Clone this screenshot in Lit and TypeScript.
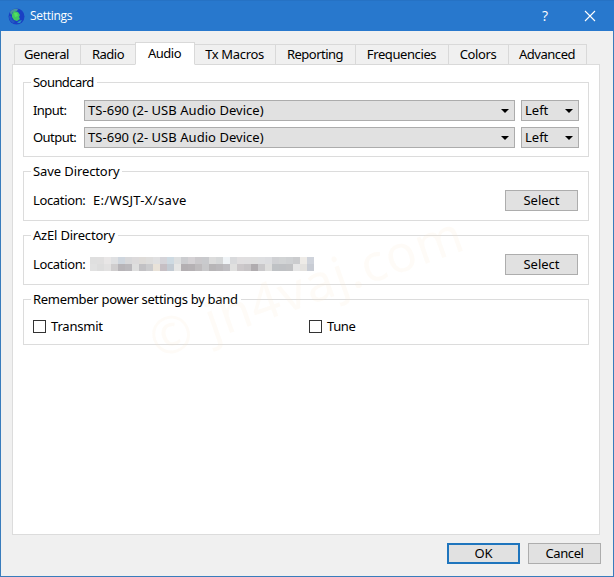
import { LitElement, html, css } from "lit";
import { customElement } from "lit/decorators.js";
import { styleMap } from "lit/directives/style-map.js";

const TABS: { label: string; width: number; spacing: number }[] = [
  { label: "General", width: 67, spacing: -0.4 },
  { label: "Radio", width: 54, spacing: -0.5 },
  { label: "Audio", width: 60, spacing: -0.5 },
  { label: "Tx Macros", width: 81, spacing: -0.35 },
  { label: "Reporting", width: 80, spacing: -0.5 },
  { label: "Frequencies", width: 93, spacing: -0.4 },
  { label: "Colors", width: 60, spacing: -0.4 },
  { label: "Advanced", width: 78, spacing: -0.45 },
];

const MOSAIC_TOP = "dfdfdf e0dfdf e8e6e6 dfe0e2 cfd6de d8d8da dcdadb dedbd8 dedddc e0e0e1 d5d4d9 cedae2 dddfe0 cccdd0 d5d2d5 cbc9cc c9cacd dcdcdc d6d8d9 eff3f6 d9dadc e1dfe0 e0dfe0 dfdfdf dedfe1 dcdde0 d0d1d4 d2d4d5 cfd1d3 cbccce eeebe7 cfd3db".split(" ");
const MOSAIC_BOTTOM = "e1e1e1 dddddd e2e1e1 cfcdce b7b4b8 bab8bc dedede c2c1c4 cbcbcd e9e2d8 c6bfc4 c3cbd3 e6e6e5 b3afb2 b5b1b4 bebbbd c8c8ca b7b5b7 bab8bb bfbec2 e0e0df ccc8ca c7c4c6 b0acaf cac9cb dededd bfc2c5 bfc1c4 c1c2c4 e6e6e6 e4e2df c8ccd4".split(" ");

@customElement("app-root")
export class AppRoot extends LitElement {
  static styles = css`
    :host { display: block; width: 614px; height: 577px; overflow: hidden; }
    * { box-sizing: border-box; }
    .window {
      position: relative; display: flex; flex-direction: column; height: 577px;
      background: #f0f0f0; border: 1px solid #397cbc; border-top: 0; color: #000;
      font: 13px/20px "Noto Sans", "Open Sans", sans-serif;
    }
    .titlebar {
      display: flex; align-items: center; height: 31px; margin: 0 -1px; padding-left: 8px;
      background: #2878cd; color: #fff; border-top: 1px solid #2672c4; flex: none;
    }
    .title { font: 12px/18px "Open Sans", "Noto Sans", sans-serif; letter-spacing: -0.3px; margin-left: 5px; flex: 1; }
    .help { width: 14px; text-align: center; margin-right: 32px; font: 14px/18px "Open Sans", sans-serif; }
    .close { width: 12px; height: 12px; margin-right: 18px; }
    .tabs { display: flex; align-items: flex-end; height: 24px; margin: 10px 0 0 13px; flex: none; position: relative; z-index: 1; }
    .tab {
      height: 21px; border: 1px solid #d9d9d9; border-left-width: 0; text-align: center;
      line-height: 18px; white-space: nowrap; flex: none; padding-right: 1px;
    }
    .tab:first-child { border-left-width: 1px; padding-right: 2px; }
    .tab:nth-child(2) { border-right-width: 0; padding-right: 0; }
    .tab.active { height: 23px; background: #fff; border-left-width: 1px; border-bottom-color: #fff; line-height: 21px; }
    .pane {
      height: 471px; width: 588px; margin: -1px 0 0 11px; border: 1px solid #dcdcdc; background: #fff;
      padding: 17px 10px 0; display: flex; flex-direction: column; gap: 14px; flex: none;
    }
    .group { position: relative; border: 1px solid #dcdcdc; width: 566px; padding: 0 10px 0 9px; flex: none; }
    .legend { position: absolute; left: 7px; top: -11px; padding: 0 3px 0 2px; background: #fff; white-space: nowrap; }
    .sound { height: 75px; padding-top: 17px; padding-right: 9px; display: flex; flex-direction: column; gap: 6px; }
    .directory { height: 50px; padding-top: 18px; }
    .power { height: 46px; padding-top: 17px; display: flex; }
    .row { display: flex; align-items: center; height: 21px; line-height: 18px; }
    .row > span, .combo > span, .check > span:last-child { padding-bottom: 2px; }
    .label { width: 51px; flex: none; }
    .combo {
      display: flex; align-items: center; justify-content: space-between; height: 21px; flex: none;
      background: #e1e1e1; border: 1px solid #acacac; padding: 0 5px 0 3px; white-space: nowrap;
    }
    .device { width: 431px; margin-right: 6px; }
    .channel { width: 58px; }
    .arrow { width: 8px; height: 4px; flex: none; }
    .grow { flex: 1; }
    .location { width: 57px; }
    .path { margin-left: 3px; }
    .mosaic { width: 224px; height: 14px; margin-bottom: 1px; display: grid; grid-template: 7px 7px / repeat(32, 7px); }
    .button {
      width: 73px; height: 21px; padding: 0; border: 1px solid #adadad; background: #e1e1e1;
      font: inherit; line-height: 17px; color: #000; text-align: center;
    }
    .button.default { border: 2px solid #1f75bd; }
    .check { display: flex; align-items: center; height: 19px; width: 276px; gap: 5px; line-height: 18px; flex: none; }
    .box { width: 13px; height: 13px; border: 1px solid #333; background: #fff; }
    .footer { display: flex; justify-content: flex-end; gap: 8px; padding: 8px 12px 0 0; }
    .t-sound, .t-input, .t-output { letter-spacing: -0.55px; }
    .t-save { letter-spacing: -0.1px; }
    .t-azel, .t-transmit { letter-spacing: -0.2px; }
    .t-power { letter-spacing: -0.3px; }
    .t-location { letter-spacing: -0.35px; }
    .t-path { letter-spacing: 0.33px; }
    .t-device { letter-spacing: 0.04px; }
    .t-tune, .t-cancel { letter-spacing: -0.4px; }
    .watermark {
      position: absolute; left: 105px; top: 256px; width: 400px; text-align: center;
      font-size: 51px; line-height: 58px; letter-spacing: 1.3px; white-space: nowrap;
      color: rgba(250, 225, 200, 0.14); transform: rotate(-19.5deg); pointer-events: none; z-index: 2;
    }
  `;

  private arrow() {
    return html`<svg class="arrow" viewBox="0 0 8 4"><path d="M0 0H8L4 4Z" /></svg>`;
  }

  private soundRow(name: string, cls: string) {
    return html`<div class="row">
      <span class="label ${cls}">${name}</span>
      <div class="combo device"><span class="t-device">TS-690 (2- USB Audio Device)</span>${this.arrow()}</div>
      <div class="combo channel"><span>Left</span>${this.arrow()}</div>
    </div>`;
  }

  private cells(colors: string[]) {
    return colors.map((c) => html`<i style=${styleMap({ background: "#" + c })}></i>`);
  }

  render() {
    return html`<div class="window">
      <div class="titlebar">
        <svg width="17" height="17" viewBox="0 0 17 17">
          <circle cx="8.5" cy="8.5" r="8" fill="#1a40c4" />
          <path d="M2 4Q5 0 10 1L9 3L5 4L3 7Z" fill="#4a93a0" />
          <path d="M4 6L6 3L10 4L12 7L11 9L12 11L9 13L6 12L4 9Z" fill="#3fc862" />
          <path d="M6 5L9 5L10 8L7 9Z" fill="#52e060" />
          <path d="M1 8L3 8L4 11L7 14L5 15Q1 13 1 8Z" fill="#2358c4" />
          <path d="M11 13L14 12L12 15L9 15Z" fill="#2795c0" />
        </svg>
        <span class="title">Settings</span>
        <span class="help">?</span>
        <svg class="close" viewBox="0 0 12 12"><path d="M1 1L11 11M11 1L1 11" stroke="#fff" stroke-width="1.1" /></svg>
      </div>
      <div class="tabs">
        ${TABS.map((t) => html`<div class="tab ${t.label === "Audio" ? "active" : ""}"
          style=${styleMap({ width: t.width + "px", letterSpacing: t.spacing + "px" })}>${t.label}</div>`)}
      </div>
      <div class="pane">
        <div class="group sound">
          <span class="legend t-sound">Soundcard</span>
          ${this.soundRow("Input:", "t-input")}${this.soundRow("Output:", "t-output")}
        </div>
        <div class="group directory">
          <span class="legend t-save">Save Directory</span>
          <div class="row"><span class="location t-location">Location:</span><span class="path t-path">E:/WSJT-X/save</span>
            <span class="grow"></span><button class="button">Select</button></div>
        </div>
        <div class="group directory">
          <span class="legend t-azel">AzEl Directory</span>
          <div class="row"><span class="location t-location">Location:</span>
            <div class="mosaic">${this.cells(MOSAIC_TOP)}${this.cells(MOSAIC_BOTTOM)}</div>
            <span class="grow"></span><button class="button">Select</button></div>
        </div>
        <div class="group power">
          <span class="legend t-power">Remember power settings by band</span>
          <label class="check"><span class="box"></span><span class="t-transmit">Transmit</span></label>
          <label class="check"><span class="box"></span><span class="t-tune">Tune</span></label>
        </div>
      </div>
      <div class="footer">
        <button class="button default">OK</button><button class="button t-cancel">Cancel</button>
      </div>
      <div class="watermark">© jh4vaj.com</div>
    </div>`;
  }
}
